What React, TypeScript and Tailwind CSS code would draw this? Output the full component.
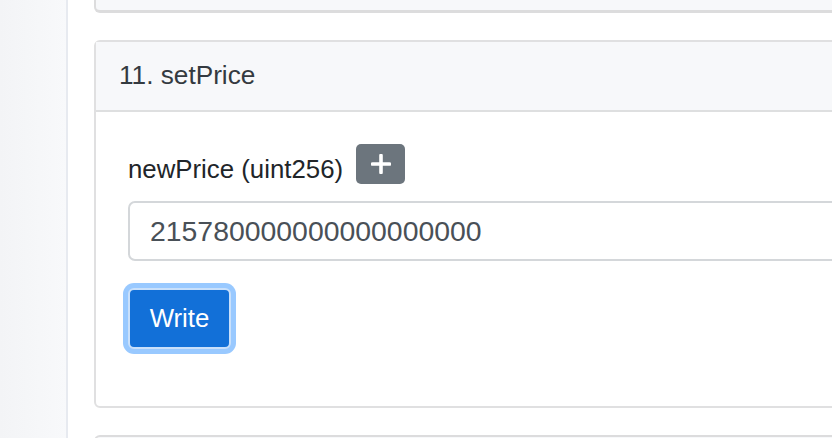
import React from 'react';

const PlusIcon = () => (
  <svg width="20" height="20" viewBox="0 0 20 20" fill="none">
    <path d="M10 1.5v17M1.5 10h17" stroke="#ffffff" strokeWidth="3.6" strokeLinecap="round" />
  </svg>
);

const App = () => {
  return (
    <div className="flex h-[438px] w-[832px] overflow-hidden bg-white font-['Liberation_Sans',Arial,sans-serif]">
      <aside className="h-full w-[68px] shrink-0 border-r-2 border-[#e7eaf0] bg-gradient-to-r from-[#f3f4f6] to-[#f8f9fb]" />

      <main className="flex w-[820px] shrink-0 flex-col gap-[27px] pl-[26px]">
        <div className="h-[13px] shrink-0 rounded-b-[6px] border-x-2 border-b-[3px] border-[#dcdcdd] bg-[#f7f8fa]" />

        <section className="shrink-0 rounded-[6px] border-2 border-[#e0e0e1] bg-white">
          <header className="flex h-[70px] items-center border-b-2 border-[#dedfe0] bg-[#f7f8fa] pl-[23px] text-[26.2px] text-[#343a40]">
            11. setPrice
          </header>

          <div className="px-[32px] pt-[32px] pb-[57px]">
            <div className="flex items-end gap-[13px]">
              <label className="pb-[1px] text-[25.8px] leading-none text-[#212529]">newPrice (uint256)</label>
              <button className="flex h-[40px] w-[49px] items-center justify-center rounded-[5px] bg-[#6c757d]">
                <PlusIcon />
              </button>
            </div>

            <input
              readOnly
              value="215780000000000000000"
              className="mt-[17px] h-[60px] w-full rounded-[7px] border-2 border-[#d4d7da] px-[20px] text-[28.4px] text-[#495057] outline-none"
            />

            <button className="mt-[27px] h-[61px] w-[103px] rounded-[6px] border-2 border-[#c9e0fb] bg-[#1270d8] text-[25.8px] text-white shadow-[0_0_0_5px_#99c9ff]">
              Write
            </button>
          </div>
        </section>

        <div className="h-[20px] shrink-0 rounded-t-[6px] border-x-2 border-t-2 border-[#dcdcdd] bg-[#f7f8fa]" />
      </main>
    </div>
  );
};

export default App;
